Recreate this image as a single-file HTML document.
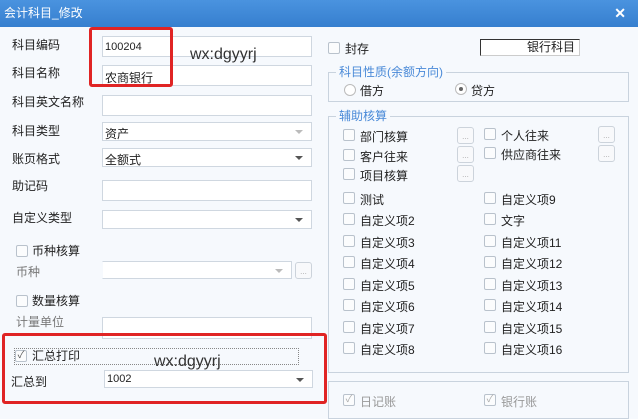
<!DOCTYPE html>
<html><head><meta charset="utf-8"><style>
*{box-sizing:border-box;margin:0;padding:0}
body{width:638px;height:419px;overflow:hidden;background:#f6f9fd;font-family:"Liberation Sans","Noto Sans CJK SC",sans-serif;font-size:12px;color:#222;position:relative}
.a{position:absolute;white-space:nowrap}
.title{left:0;top:0;width:638px;height:27px;background:linear-gradient(#4a93df,#367fcf);color:#fff;font-size:12px;line-height:26px;padding-left:4px}
.in{position:absolute;background:#fff;border:1px solid #cfd7e0}
.dd::after{content:"";position:absolute;right:8px;top:7px;border:4px solid transparent;border-top:4px solid #555}
.dd.g::after{border-top-color:#bbb}
.cb{position:absolute;width:12px;height:12px;border:1px solid #b9c2cc;background:#fbfcfd;border-radius:2px;margin:-1px 0 0 -1px}
.btn{position:absolute;width:17px;height:17px;border:1px solid #ccd3db;border-radius:3px;background:#f8f9fb;color:#aaa;font-size:8px;text-align:center;line-height:18px}
.grp{position:absolute;border:1px solid #c9d3de}
.gl{position:absolute;color:#4a8ad8;background:#f6f9fd;padding:0 3px;font-size:12px;line-height:14px}
.red{position:absolute;border:3px solid #e02424;border-radius:3px}
.wx{position:absolute;font-size:16px;color:#333}
</style></head><body>
<div class="a title">会计科目_修改</div>
<div class="a" style="right:12px;top:5px;color:#fff;font-size:14px;font-weight:bold">✕</div>

<div class="a" style="left:12px;top:36px">科目编码</div>
<div class="a" style="left:12px;top:64px">科目名称</div>
<div class="a" style="left:12px;top:93px">科目英文名称</div>
<div class="a" style="left:12px;top:122px">科目类型</div>
<div class="a" style="left:12px;top:150px">账页格式</div>
<div class="a" style="left:12px;top:177px">助记码</div>
<div class="a" style="left:12px;top:209px">自定义类型</div>

<div class="in" style="left:102px;top:36px;width:210px;height:21px;font-size:11px;padding:4px 2px">100204</div>
<div class="in" style="left:102px;top:65px;width:210px;height:21px;padding:3px 2px">农商银行</div>
<div class="in" style="left:102px;top:95px;width:210px;height:21px"></div>
<div class="in dd g" style="left:102px;top:122px;width:210px;height:19px;padding:2px 2px">资产</div>
<div class="in dd" style="left:102px;top:148px;width:210px;height:19px;padding:2px 2px">全额式</div>
<div class="in" style="left:102px;top:180px;width:210px;height:21px"></div>
<div class="in dd" style="left:102px;top:210px;width:210px;height:19px"></div>

<div class="cb" style="left:17px;top:246px"></div><div class="a" style="left:32px;top:242px">币种核算</div>
<div class="a" style="left:16px;top:263px;color:#777">币种</div>
<div class="in dd g" style="left:102px;top:261px;width:190px;height:18px;border-left-color:#f6f9fd"></div>
<div class="btn" style="left:295px;top:262px">...</div>
<div class="cb" style="left:17px;top:296px"></div><div class="a" style="left:32px;top:292px">数量核算</div>
<div class="a" style="left:16px;top:313px;color:#777">计量单位</div>
<div class="in" style="left:102px;top:317px;width:210px;height:22px"></div>

<div class="a" style="left:14px;top:348px;width:285px;height:17px;border:1px dotted #888"></div>
<div class="cb" style="left:16px;top:351px;color:#555;font-size:10px;line-height:10px;text-align:center">✓</div>
<div class="a" style="left:32px;top:347px">汇总打印</div>
<div class="a" style="left:11px;top:373px">汇总到</div>
<div class="in dd" style="left:104px;top:370px;width:209px;height:18px;font-size:11px;padding:2px 2px">1002</div>

<div class="red" style="left:89px;top:27px;width:84px;height:60px"></div>
<div class="red" style="left:2px;top:333px;width:325px;height:71px"></div>
<div class="wx" style="left:190px;top:46px">wx:dgyyrj</div>
<div class="wx" style="left:154px;top:353px">wx:dgyyrj</div>

<div class="cb" style="left:329px;top:43px"></div><div class="a" style="left:345px;top:40px">封存</div>
<div class="a" style="left:480px;top:39px;width:100px;height:17px;border:1px solid #333;border-right-color:#ccc;border-bottom-color:#ccc;background:#fff;text-align:right;padding-right:4px;line-height:15px">银行科目</div>

<div class="grp" style="left:328px;top:72px;width:301px;height:30px"></div>
<div class="gl" style="left:336px;top:65px">科目性质(余额方向)</div>
<div class="a" style="left:344px;top:84px;width:12px;height:12px;border:1px solid #bbb;border-radius:50%;background:#fff"></div>
<div class="a" style="left:360px;top:82px">借方</div>
<div class="a" style="left:455px;top:83px;width:12px;height:12px;border:1px solid #bbb;border-radius:50%;background:#fff"><div style="width:4px;height:4px;background:#666;border-radius:50%;margin:3px"></div></div>
<div class="a" style="left:471px;top:82px">贷方</div>

<div class="grp" style="left:328px;top:116px;width:301px;height:257px"></div>
<div class="gl" style="left:336px;top:109px">辅助核算</div>

<div class="cb" style="left:344px;top:130px"></div><div class="a" style="left:360px;top:128px">部门核算</div>
<div class="cb" style="left:344px;top:150px"></div><div class="a" style="left:360px;top:148px">客户往来</div>
<div class="cb" style="left:344px;top:169px"></div><div class="a" style="left:360px;top:167px">项目核算</div>
<div class="btn" style="left:457px;top:127px">...</div>
<div class="btn" style="left:457px;top:146px">...</div>
<div class="btn" style="left:457px;top:165px">...</div>
<div class="cb" style="left:485px;top:129px"></div><div class="a" style="left:501px;top:127px">个人往来</div>
<div class="cb" style="left:485px;top:148px"></div><div class="a" style="left:501px;top:146px">供应商往来</div>
<div class="btn" style="left:598px;top:126px">...</div>
<div class="btn" style="left:598px;top:145px">...</div>

<div class="cb" style="left:344px;top:193px"></div><div class="a" style="left:360px;top:191px">测试</div>
<div class="cb" style="left:344px;top:214px"></div><div class="a" style="left:360px;top:212px">自定义项2</div>
<div class="cb" style="left:344px;top:236px"></div><div class="a" style="left:360px;top:234px">自定义项3</div>
<div class="cb" style="left:344px;top:257px"></div><div class="a" style="left:360px;top:255px">自定义项4</div>
<div class="cb" style="left:344px;top:279px"></div><div class="a" style="left:360px;top:277px">自定义项5</div>
<div class="cb" style="left:344px;top:300px"></div><div class="a" style="left:360px;top:298px">自定义项6</div>
<div class="cb" style="left:344px;top:322px"></div><div class="a" style="left:360px;top:320px">自定义项7</div>
<div class="cb" style="left:344px;top:343px"></div><div class="a" style="left:360px;top:341px">自定义项8</div>

<div class="cb" style="left:485px;top:193px"></div><div class="a" style="left:501px;top:191px">自定义项9</div>
<div class="cb" style="left:485px;top:214px"></div><div class="a" style="left:501px;top:212px">文字</div>
<div class="cb" style="left:485px;top:236px"></div><div class="a" style="left:501px;top:234px">自定义项11</div>
<div class="cb" style="left:485px;top:257px"></div><div class="a" style="left:501px;top:255px">自定义项12</div>
<div class="cb" style="left:485px;top:279px"></div><div class="a" style="left:501px;top:277px">自定义项13</div>
<div class="cb" style="left:485px;top:300px"></div><div class="a" style="left:501px;top:298px">自定义项14</div>
<div class="cb" style="left:485px;top:322px"></div><div class="a" style="left:501px;top:320px">自定义项15</div>
<div class="cb" style="left:485px;top:343px"></div><div class="a" style="left:501px;top:341px">自定义项16</div>

<div class="grp" style="left:328px;top:381px;width:301px;height:38px"></div>
<div class="cb" style="left:344px;top:395px;color:#aaa;font-size:10px;line-height:10px;text-align:center">✓</div><div class="a" style="left:360px;top:393px;color:#999">日记账</div>
<div class="cb" style="left:485px;top:395px;color:#aaa;font-size:10px;line-height:10px;text-align:center">✓</div><div class="a" style="left:501px;top:393px;color:#999">银行账</div>
</body></html>
